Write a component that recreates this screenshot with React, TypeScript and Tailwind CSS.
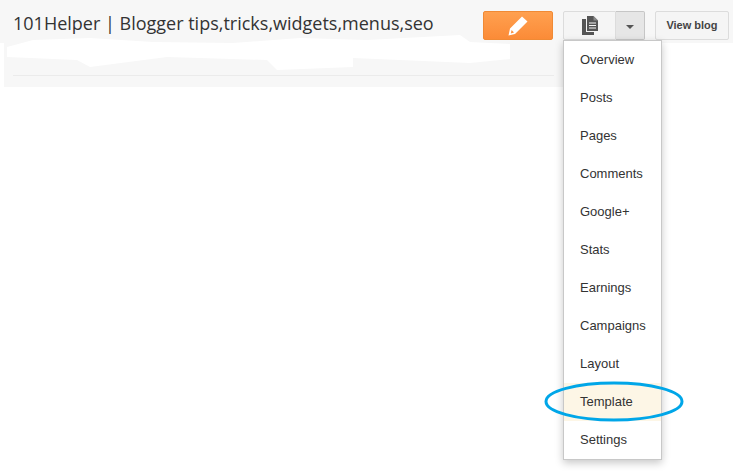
const menuItems = ["Overview", "Posts", "Pages", "Comments", "Google+", "Stats", "Earnings", "Campaigns", "Layout", "Template", "Settings"]

function PagesIcon() {
  return (
    <svg width="16" height="19" viewBox="0 0 16 19" fill="#555">
      <path d="M5 0h6.5L16 4.5V15H5z M7 6.5v1h7v-1z M7 9v1h7V9z M7 11.5v1h7v-1z" fillRule="evenodd" />
      <path d="M11.5 0v4.5H16z" fill="#888" />
      <path d="M0 3h4v13h8v3H0z" />
    </svg>
  )
}

function PencilIcon() {
  return (
    <svg width="20" height="20" viewBox="0 0 20 20" fill="#fff">
      <path d="M14 0.5 L19.5 5.5 L7 18 L0.5 19.5 L2 12.5 Z M3.6 14 L2.8 17.4 L6 16.5 Z" fillRule="evenodd" />
    </svg>
  )
}

export default function App() {
  return (
    <div className="relative h-[471px] w-[733px] overflow-hidden bg-white font-['Liberation_Sans',Arial,sans-serif]">
      {/* Barra superior */}
      <div className="flex h-[43px] items-start bg-[#f7f7f7] pl-[13px] pr-[4px] pt-[11px]">
        <h1 className="flex-1 font-['Open_Sans',sans-serif] text-[18px] leading-[24px] font-normal text-[#333]">
          101Helper | Blogger tips,tricks,widgets,menus,seo
        </h1>
        <button className="flex h-[29px] w-[70px] items-center justify-center rounded-[2px] border border-[#f08a35] bg-gradient-to-b from-[#ffa04f] to-[#fb8b37]">
          <PencilIcon />
        </button>
        <div className="ml-[10px] flex h-[29px]">
          <button className="flex w-[53px] items-center justify-center rounded-l-[2px] border border-[#dcdcdc] bg-[#f5f5f5]">
            <PagesIcon />
          </button>
          <button className="flex w-[29px] items-center justify-center rounded-r-[2px] border border-l-0 border-[#c6c6c6] bg-[#e6e6e6]">
            <span className="mt-[2px] h-0 w-0 border-x-[4px] border-t-[4px] border-x-transparent border-t-[#555]" />
          </button>
        </div>
        <button className="ml-[10px] h-[29px] w-[74px] rounded-[2px] border border-[#dcdcdc] bg-[#f5f5f5] text-[11px] font-bold text-[#444]">
          View blog
        </button>
      </div>

      {/* Panel bajo el título */}
      <div className="ml-[4px] h-[44px] w-[559px] bg-[#f7f7f7] px-[9px] pt-[32px]">
        <div className="h-px bg-[#ebebeb]" />
      </div>

      {/* Zona borrada del subtítulo */}
      <svg className="absolute left-0 top-[30px]" width="515" height="45" viewBox="0 0 515 45" fill="#fff">
        <path d="M7 17 L33 10 L90 8 L153 12 L233 13 L300 8 L367 10 L460 5 L470 12 L510 14 L510 29 L470 33 L353 28 L353 37 L277 40 L267 30 L167 27 L90 37 L77 30 L7 27 Z" />
        <path d="M0 33 H4 V45 H0 Z" />
      </svg>

      {/* Menú desplegable */}
      <div className="absolute left-[563px] top-[40px] w-[99px] border border-[#c8c8c8] bg-white shadow-[0_3px_8px_rgba(0,0,0,0.22)]">
        {menuItems.map((item) => (
          <div
            key={item}
            className={`flex h-[38px] items-center pl-[16px] text-[13px] text-[#333] ${item === "Template" ? "bg-[#fdf6e6]" : ""}`}
          >
            {item}
          </div>
        ))}
      </div>

      {/* Anotación azul */}
      <svg className="absolute left-[544px] top-[381px]" width="140" height="42" viewBox="0 0 140 42" fill="none">
        <ellipse cx="70" cy="20.5" rx="68" ry="18.5" stroke="#00a6e8" strokeWidth="3" />
      </svg>
    </div>
  )
}
